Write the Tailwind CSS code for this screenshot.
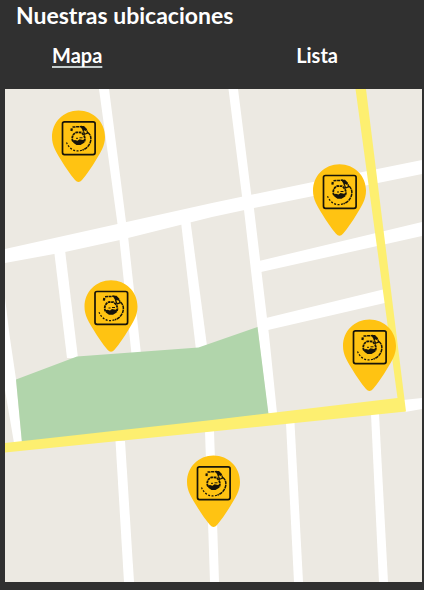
<!DOCTYPE html>
<html lang="es">
<head>
<meta charset="utf-8">
<meta name="viewport" content="width=device-width, initial-scale=1">
<title>Nuestras ubicaciones</title>
<script src="https://cdn.jsdelivr.net/npm/@tailwindcss/browser@4"></script>
</head>
<body class="min-h-screen bg-[#303030] font-['Lato',sans-serif] font-bold text-white">
<header class="px-4">
  <h1 class="pt-[3px] text-[23px] leading-6 font-bold">Nuestras ubicaciones</h1>
  <nav class="mt-3.5 flex justify-between pr-[70px] pb-5 pl-9 text-xl leading-7">
    <a href="#mapa" aria-current="page" class="underline decoration-[#c4cccc] decoration-2 underline-offset-3">Mapa</a>
    <a href="#lista">Lista</a>
  </nav>
</header>
<main id="mapa" class="pr-0.5 pb-2 pl-[5px]">
  <svg class="block h-auto w-full" viewBox="5 89 417 493" role="group" aria-label="Mapa">
    <defs>
      <g id="pin">
        <path d="M78.500 110.500C63.500 110.500 52 122 52 137C52 146 56.500 152.500 61 160C65.500 167.500 70 174 75 180Q78.500 184 82 180C87 174 91.500 167.500 96 160C100.500 152.500 105 146 105 137C105 122 93.500 110.500 78.500 110.500Z" fill="#ffc312"/>
        <g fill="none" stroke="#17140a">
          <rect x="62.500" y="121.800" width="32.600" height="32.800" rx="2" stroke-width="1.700"/>
          <path d="M72.500 127.100L82 126.500" stroke-width="1.500" stroke-dasharray="3 .6"/>
          <path d="M71.400 131L71.800 128.300" stroke-width="2.200"/>
          <path d="M84 134.500L87.500 133.200L87 130.500M83.500 131.500L84.500 134" stroke-width="1.300"/>
          <path d="M88 132.500C90.500 134.500 91.500 138 90.500 141.500C89.500 145.500 86.500 148.800 82.500 150" stroke-width="1.500" stroke-dasharray="3.500 .6"/>
          <path d="M82 150.200C75.500 152.500 69.500 149.500 66.500 142.500" stroke-width="1.200" stroke-dasharray="2 1.500"/>
          <path d="M73 141.500C71 138 73 133.500 76.500 132.300L81 132.500C84.500 134.500 86 139 84 142" stroke-width="1.800" stroke-dasharray="2.700 .6"/>
          <path d="M76 138.300H78M79.500 137.800H82.500" stroke-width="1"/>
        </g>
        <path d="M80 126H84L87.200 129.300L86 131.300L84.500 130.300L83 132.300L82.200 129.500ZM72.800 140.500L75 140L77.500 140.800L79.500 139.300L83 140L84.800 139L84.200 142.700L80.500 145H76.500L73.300 142.800Z" fill="#17140a"/>
      </g>
    </defs>
    <path d="M5 89H422V582H5Z" fill="#ece9e2"/>
    <g fill="#fff">
      <path d="M99 89H109L126 222L128 236L141 354H131.500L119.500 240L117.500 224Z"/>
      <path d="M5 249L117.500 224L212 203L313 182L422 160V174L378 183L254 208L212 217L120 240L65 252L5 263Z"/>
      <path d="M54 250H65L78 358H67Z"/>
      <path d="M181 222L190 218L207 346L196 350Z"/>
      <path d="M5 298L9.500 335L16 379L22 443H14L5 390Z"/>
      <path d="M228.500 89H238L251 193L254 209L269 335L277 413H268L257.500 327L244 210L242 196Z"/>
      <path d="M259 261L422 222V236L261 272Z"/>
      <path d="M266 318L385 289L389 302L268 330Z"/>
      <path d="M403 400L422 398V409L405 412Z"/>
      <path d="M115.500 441H125L134 582H124Z"/>
      <path d="M205 431H214L219 582H210Z"/>
      <path d="M286 423H294.500L303 582H294Z"/>
      <path d="M371 414H379L388 582H379Z"/>
    </g>
    <path d="M16 379.500L77 356.500L198.500 347.500L257.500 327L268.500 414L22 443Z" fill="#b1d5ab"/>
    <path d="M355.500 89H366L406 411.500L212 431.500L5 452.500V443L212 420L397.500 398Z" fill="#fdef70"/>
    <a href="#ubicacion-1" aria-label="Ubicación 1"><use href="#pin"/></a>
    <a href="#ubicacion-2" aria-label="Ubicación 2"><use href="#pin" x="261" y="53.700"/></a>
    <a href="#ubicacion-3" aria-label="Ubicación 3"><use href="#pin" x="32.500" y="169.700"/></a>
    <a href="#ubicacion-4" aria-label="Ubicación 4"><use href="#pin" x="291" y="209"/></a>
    <a href="#ubicacion-5" aria-label="Ubicación 5"><use href="#pin" x="135" y="345"/></a>
  </svg>
</main>
</body>
</html>
